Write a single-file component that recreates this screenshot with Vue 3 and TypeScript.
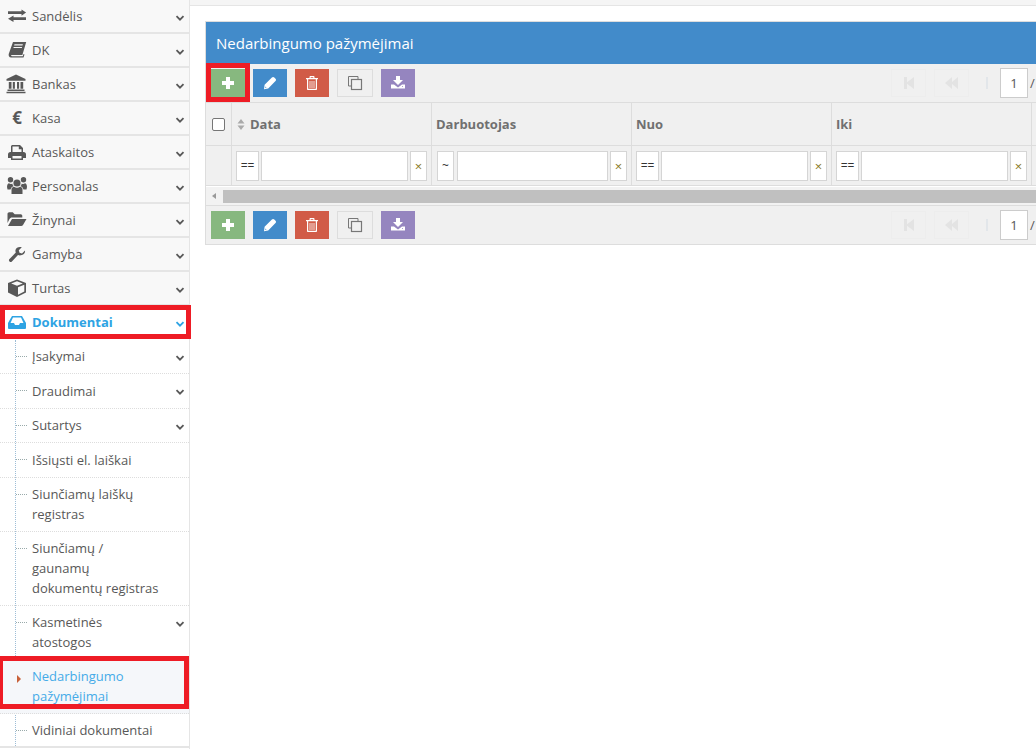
<script setup lang="ts">
interface TopItem { label: string; d?: string; glyph?: string }
interface SubItem { label: string[]; dot: boolean; chev: boolean; cls?: string }

const circle = (x: number, y: number, r: number) =>
  `M${x - r} ${y}a${r} ${r} 0 1 0 ${2 * r} 0a${r} ${r} 0 1 0 ${-2 * r} 0z`;

const topItems: TopItem[] = [
  { label: 'Sandėlis', d: 'M2 5.200h13.500V3.400l4.600 3.200-4.600 3.200V8H2zM20 11.200H7.500V9.400l-5.500 3.300 5.500 3.300v-1.900H20z' },
  { label: 'DK', d: 'M7 2h13.200l-3.800 13H6.200c-1.700 0-1.700 1.300 0 1.300h10.600l.7-2.200 1 .4-1 3H5.200C3 17.500 2.200 15.600 2.800 13.800zM8.500 4.300l-.4 1.300h8.400l.4-1.300zM7.700 7l-.3 1.100h8.400l.3-1.100z' },
  { label: 'Bankas', d: 'M10 .5l9.500 4.500v1.800H.5V5zM2.800 8h2.700v6.800H2.800zM6.800 8h2.100v6.800H6.800zM11 8h2.100v6.800H11zM14.500 8h2.700v6.800h-2.700zM1.500 15.500h17v1.600h-17zM.5 17.700h19v1.500H.5z' },
  { label: 'Kasa', glyph: '€' },
  { label: 'Ataskaitos', d: 'M6 3h8l3 3v4h.5A2.500 2.500 0 0 1 20 12.500V16h-3v2H5v-2H2v-3.500A2.500 2.500 0 0 1 4.500 10H5V4zM6.500 4.500V10h9V7.200h-2.700V4.500zM6.500 14v2.600h9V14z' },
  { label: 'Personalas', d: circle(11, 7, 3.6) + circle(4.5, 3.8, 2.7) + circle(17.5, 3.8, 2.7) + 'M5.500 18v-4.500c0-2 1.500-2.800 2.500-2.800q3 2 6 0c1 0 2.500.8 2.500 2.800V18zM1 11c0-2.500 1-3.800 2-3.800q1.800 1.300 3.200.2.500 2 1.500 2.600-2.500.8-3.200 3.500H1.500zM21 11c0-2.500-1-3.800-2-3.800q-1.800 1.300-3.200.2-.500 2-1.500 2.600 2.500.8 3.200 3.500h3z' },
  { label: 'Žinynai', d: 'M1.500 4c0-1 .7-1.800 1.700-1.800h3.500l2 2.100h6c1 0 1.600.7 1.600 1.700V7.500H6c-1.200 0-2 .6-2.500 1.600L1.500 13zM6 9h14.500L17 15c-.4.700-1 1-1.800 1H2z' },
  { label: 'Gamyba', d: 'M19 6.500l-3 3-2.500-.7-.7-2.500 3-3C13 2.500 10 3.500 9.500 6c-.2 1 0 2 .3 2.600L3.500 15a1.600 1.600 0 0 0 2.400 2.400L12 11c1 .4 2 .5 3 .3 2.500-.5 4.500-2.500 4-4.800z' },
  { label: 'Turtas', d: 'M11 1.500L20 5v9.500L11 19l-9-4.500V5zM11 3.200L5.200 5.500 11 7.800l5.800-2.300zM12 9.300v7.500l6.300-3.300V6.800z' },
];

const inbox = 'M6 4h10l4 7v5a1 1 0 0 1-1 1H3a1 1 0 0 1-1-1v-5zM7 5.500L4.500 11H8l1 2h4l1-2h3.500L15 5.500z';

const subItems: SubItem[] = [
  { label: ['Įsakymai'], dot: true, chev: true, cls: 'h345' },
  { label: ['Draudimai'], dot: true, chev: true, cls: 'h345' },
  { label: ['Sutartys'], dot: true, chev: true, cls: 'h345' },
  { label: ['Išsiųsti el. laiškai'], dot: true, chev: false, cls: 'h345' },
  { label: ['Siunčiamų laiškų', 'registras'], dot: true, chev: false },
  { label: ['Siunčiamų /', 'gaunamų', 'dokumentų registras'], dot: true, chev: false },
  { label: ['Kasmetinės', 'atostogos'], dot: true, chev: true },
  { label: ['Nedarbingumo', 'pažymėjimai'], dot: false, chev: false, cls: 'current' },
  { label: ['Vidiniai dokumentai'], dot: true, chev: false },
];

interface Col { title: string; op: string; opCls: string; sort: boolean }
const cols: Col[] = [
  { title: 'Data', op: '==', opCls: '', sort: true },
  { title: 'Darbuotojas', op: '~', opCls: 'narrow', sort: false },
  { title: 'Nuo', op: '==', opCls: '', sort: false },
  { title: 'Iki', op: '==', opCls: '', sort: false },
];
const bars = [0, 1];
</script>

<template>
  <div class="page">
    <aside class="side">
      <div v-for="it in topItems" :key="it.label" class="top">
        <span class="ico">
          <span v-if="it.glyph" class="euro">{{ it.glyph }}</span>
          <svg v-else width="22" height="20" viewBox="0 0 22 20"><path :d="it.d" fill="#585858" fill-rule="evenodd" /></svg>
        </span>
        <span class="lbl">{{ it.label }}</span>
        <svg class="chev" width="10" height="7" viewBox="0 0 10 7"><path d="M1.500 1.200L5 4.700l3.500-3.500" fill="none" stroke="#585858" stroke-width="1.800" /></svg>
      </div>

      <div class="top open">
        <span class="ico">
          <svg width="22" height="20" viewBox="0 0 22 20"><path :d="inbox" fill="#2ea3e3" fill-rule="evenodd" /></svg>
        </span>
        <span class="lbl">Dokumentai</span>
        <svg class="chev" width="10" height="7" viewBox="0 0 10 7"><path d="M1.500 1.200L5 4.700l3.500-3.500" fill="none" stroke="#2ea3e3" stroke-width="1.800" /></svg>
      </div>

      <div class="sub">
        <div v-for="s in subItems" :key="s.label[0]" class="leaf" :class="s.cls">
          <i v-if="s.dot" class="tick"></i>
          <i v-else class="arrow"></i>
          <span class="leaf-text"><span v-for="l in s.label" :key="l" class="line">{{ l }}</span></span>
          <svg v-if="s.chev" class="chev" width="10" height="7" viewBox="0 0 10 7"><path d="M1.500 1.200L5 4.700l3.500-3.500" fill="none" stroke="#585858" stroke-width="1.800" /></svg>
        </div>
      </div>

      <div class="mark mark-a"></div>
      <div class="mark mark-b"></div>
    </aside>

    <main class="main">
      <div class="topstrip"></div>
      <section class="box">
        <h1 class="title">Nedarbingumo pažymėjimai</h1>

        <template v-for="b in bars" :key="b">
          <div class="bar" :class="b === 0 ? 'bar-top' : 'bar-bottom'">
            <button class="btn green"><svg width="14" height="14" viewBox="0 0 14 14"><path d="M5 1h4v4h4v4H9v4H5V9H1V5h4z" fill="#fff" /></svg></button>
            <button class="btn blue"><svg width="14" height="14" viewBox="0 0 14 14"><path d="M1 13.200l.6-4.400L8.900 1.500c.7-.7 1.700-.7 2.400 0l1.200 1.200c.7.7.7 1.700 0 2.400l-7.300 7.300zM2.500 10.600l-.3 1.300 1.300-.3z" fill="#fff" fill-rule="evenodd" /></svg></button>
            <button class="btn red"><svg width="12" height="14" viewBox="0 0 12 14"><path d="M3.500 2V1c0-.5.3-1 1-1h3c.7 0 1 .5 1 1v1H12v1.300H11V13c0 .6-.4 1-1 1H2c-.6 0-1-.4-1-1V3.300H0V2zM4.700 2h2.600V1.200H4.700zM2.200 3.300v9.500h7.600V3.300zM3.600 5h.8v7h-.8zM5.600 5h.8v7h-.8zM7.600 5h.8v7h-.8z" fill="#fff" fill-rule="evenodd" /></svg></button>
            <button class="btn ghost"><svg width="16" height="16" viewBox="0 0 16 16"><path d="M11 4V1.500H1.500V11H4" fill="none" stroke="#777" stroke-width="1" /><rect x="4.500" y="4.500" width="10" height="10" fill="none" stroke="#777" stroke-width="1.200" /></svg></button>
            <button class="btn purple"><svg width="14" height="14" viewBox="0 0 14 14"><path d="M5 0h4v4h3L7 9 2 4h3zM0 8.500h3l4 3 4-3h3v4H0zM11 10.300h1v.8h-1z" fill="#fff" fill-rule="evenodd" /></svg></button>

            <div class="pager">
              <span class="pg"><svg width="10" height="12" viewBox="0 0 10 12"><path d="M0 0h3v5.200L10 0v12L3 6.800V12H0z" fill="#e3e3e3" /></svg></span>
              <span class="pg"><svg width="13" height="12" viewBox="0 0 13 12"><path d="M7 0v5L13 0v12L7 7v5L0 6z" fill="#e3e3e3" /></svg></span>
              <i class="pg-sep"></i>
              <span class="pg-input">1</span>
              <span class="pg-slash">/</span>
            </div>
          </div>

          <template v-if="b === 0">
            <div class="grid head">
              <div class="cell check"><span class="box-check"></span></div>
              <div v-for="c in cols" :key="c.title" class="cell hcell">
                <svg v-if="c.sort" class="sort" width="8" height="11" viewBox="0 0 8 11"><path d="M4 0l3.500 4.500h-7zM4 11L.5 6.500h7z" fill="#aaa" /></svg>
                <span>{{ c.title }}</span>
              </div>
              <div class="cell"></div>
            </div>
            <div class="grid filter">
              <div class="cell"></div>
              <div v-for="c in cols" :key="c.title" class="cell fcell">
                <span class="op" :class="c.opCls">{{ c.op }}</span>
                <span class="fin"></span>
                <span class="clr">×</span>
              </div>
              <div class="cell"></div>
            </div>
            <div class="scroll">
              <i class="sc-arrow"></i>
              <i class="sc-thumb"></i>
            </div>
          </template>
        </template>
        <div class="mark mark-c"></div>
      </section>
    </main>
  </div>
</template>

<style>
html, body { margin: 0; padding: 0; background: #fff; overflow: hidden; }
</style>

<style scoped>
.page {
  width: 1036px; height: 749px; overflow: hidden; display: flex; position: relative;
  font-family: "Open Sans", sans-serif; font-size: 13px; color: #585858; background: #fff;
}
.side {
  width: 189px; flex: none; height: 749px; background: #f8f8f8;
  border-right: 1px solid #e5e5e5; position: relative; z-index: 2;
}
.top {
  border-bottom: 2px solid #e5e5e5;
  display: flex; align-items: center; position: relative; height: 32px;
}
.top.open { background: #fff; color: #2ea3e3; font-weight: 700; border-bottom: 0; height: 32px; padding-bottom: 1.500px; }
.ico { width: 22px; height: 20px; margin-left: 6px; margin-right: 4px; display: flex; align-items: center; justify-content: center; flex: none; }
.euro { font-weight: 700; font-size: 17px; color: #585858; line-height: 20px; }
.lbl { flex: 1; }
.chev { position: absolute; right: 4px; top: 15px; }
.sub { position: relative; background: #fff; height: 410px; overflow: hidden; }
.sub::before {
  content: ""; position: absolute; left: 15px; top: 0; bottom: 0;
  border-left: 1px dotted #9dbdd6;
}
.leaf {
  position: relative; padding: 6.500px 20px 6.500px 32px; border-bottom: 1px dotted #ddd; line-height: 20px;
}
.leaf.h345 { min-height: 20.500px; }
.leaf.current { color: #45abe8; background: #f5f7fa; }
.leaf:last-child { border-bottom: 2px solid #e5e5e5; padding-bottom: 5.500px; }
.leaf-text { display: block; }
.line { display: block; white-space: nowrap; }
.leaf .chev { top: 15px; }
.tick { position: absolute; left: 16px; top: 16px; width: 11px; border-top: 1px dotted #9aa; }
.arrow {
  position: absolute; left: 17px; top: 15px; width: 0; height: 0;
  border-left: 4px solid #c86139; border-top: 4px solid transparent; border-bottom: 4px solid transparent;
}
.mark { position: absolute; border: 5px solid #ee1c25; box-sizing: border-box; pointer-events: none; }
.mark-a { left: 0; top: 305px; width: 191px; height: 34px; }
.mark-b { left: -2px; top: 656px; width: 191px; height: 53px; }
.main { flex: 1; min-width: 0; position: relative; overflow: hidden; }
.topstrip { height: 5px; background: #f5f5f5; border-bottom: 1px solid #e5e5e5; }
.box {
  position: relative; margin: 15px 0 0 15px; width: 1200px;
  border: 1px solid #ddd; background: #f0f0f0;
}
.title {
  margin: 0; height: 42px; line-height: 42px; padding-left: 10px; background: #428bca;
  color: #fff; font-size: 15px; font-weight: 400;
}
.bar { display: flex; align-items: center; padding-left: 5px; box-sizing: border-box; }
.bar-top { height: 39px; border-bottom: 1px solid #ddd; }
.bar-bottom { height: 38px; }
.btn {
  width: 34px; height: 28px; padding: 0; border: 0; margin-right: 8px; display: flex;
  align-items: center; justify-content: center;
}
.green { background: #87b87f; }
.blue { background: #428bca; }
.red { background: #d15b47; }
.purple { background: #9585bf; }
.ghost { width: 36px; background: #f0f0f0; border: 1px solid #ddd; box-sizing: border-box; }
.pager { display: flex; align-items: center; margin-left: 468px; }
.pg {
  width: 35px; height: 28px; box-sizing: border-box; border: 1px solid #ededed; margin-right: 8px;
  display: flex; align-items: center; justify-content: center;
}
.pg-sep { width: 2px; height: 12px; background: #e2e6ea; margin: 0 12px 0 9px; }
.pg-input {
  width: 28px; height: 30px; box-sizing: border-box; border: 1px solid #ccc; background: #fff;
  text-align: center; line-height: 28px; color: #555;
}
.pg-slash { margin-left: 2px; }
.grid { display: grid; grid-template-columns: 26px 200px 200px 200px 200px 1fr; }
.cell { border-right: 2px solid transparent; box-sizing: border-box; position: relative; }
.cell::after { content: ""; position: absolute; top: 0; bottom: 0; right: -2px; width: 1px; background: #ddd; }
.head { height: 43px; border-bottom: 1px solid #ddd; box-sizing: border-box; }
.check { display: flex; align-items: center; padding-left: 6px; }
.box-check { width: 13px; height: 13px; border: 1px solid #767676; background: #fff; border-radius: 2px; box-sizing: border-box; }
.hcell { display: flex; align-items: center; padding-left: 4px; font-weight: 700; color: #707070; }
.sort { margin: 0 5px 0 1px; }
.filter { height: 41px; border-bottom: 1px solid #fff; box-shadow: inset 0 -1px 0 #ddd; box-sizing: border-box; }
.fcell { display: flex; padding: 5px 0 0 4px; gap: 2px; align-items: flex-start; }
.op, .fin, .clr {
  height: 30px; box-sizing: border-box; border: 1px solid #d5d5d5; background: #fff; display: block;
  text-align: center; line-height: 28px;
}
.op { width: 23px; font-size: 12px; color: #333; }
.op.narrow { width: 17px; margin-left: 1px; }
.op.narrow + .fin { width: 151px; margin-left: 1px; }
.fin { width: 147px; }
.clr { width: 17px; color: #8a7a1e; font-size: 13px; }
.scroll { height: 18px; position: relative; border-bottom: 1px solid #ddd; background: #f2f2f2; }
.sc-arrow {
  position: absolute; left: 6px; top: 6px; width: 0; height: 0;
  border-right: 4px solid #999; border-top: 3.500px solid transparent; border-bottom: 3.500px solid transparent;
}
.sc-thumb { position: absolute; left: 17px; right: 0; top: 3px; height: 13px; background: #c0c0c0; }
.mark-c { left: 0; top: 41px; width: 44px; height: 39px; }
</style>
